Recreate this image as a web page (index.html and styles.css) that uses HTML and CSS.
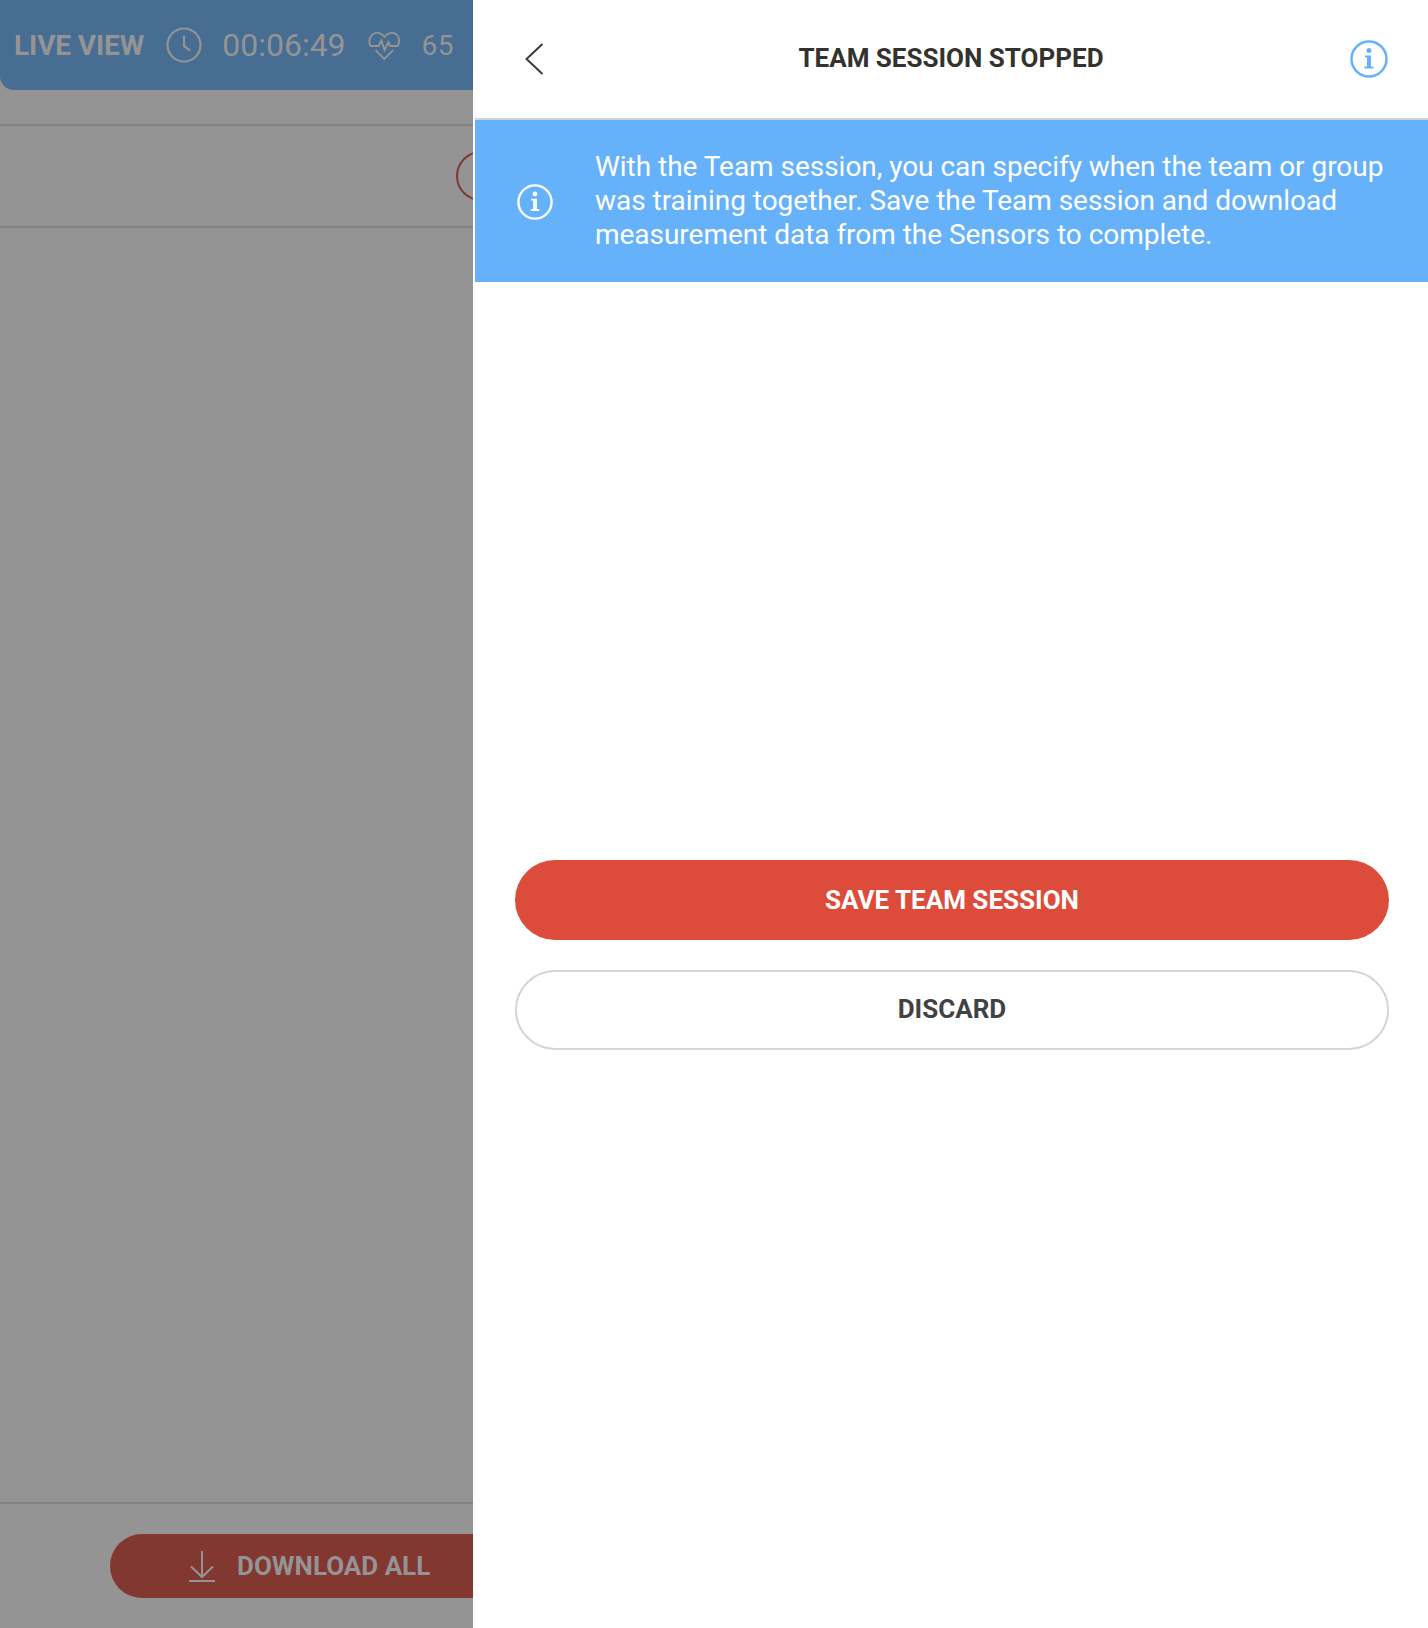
FILE: index.html
```html
<!DOCTYPE html>
<html lang="en">
<head>
<meta charset="utf-8">
<title>Team session stopped</title>
<link rel="stylesheet" href="styles.css">
</head>
<body>
<div class="stage">
  <section class="back-pane">
    <header class="topbar">
      <span class="live">LIVE VIEW</span>
      <svg class="clock" viewBox="0 0 36 36" aria-hidden="true"><circle cx="18" cy="18" r="16.500"/><path d="M18 8.500V19L24 23.500"/></svg>
      <span class="time">00:06:49</span>
      <svg class="heart" viewBox="0 0 34 30" aria-hidden="true"><path d="M2.700 15H11L13.700 9.300L17 19.300L21 11L22.700 15H30.300C34 10 31.500 1.500 24.500 1.500C21.500 1.500 19 3 17 5.500C15 3 12.500 1.500 9.500 1.500C2.500 1.500 -.5 10 2.700 15ZM7.700 19.300L16.700 28.300L26 19.300"/></svg>
      <span class="bpm">65</span>
    </header>
    <div class="row">
      <span class="ring"></span>
    </div>
    <div class="spacer"></div>
    <footer class="foot">
      <div class="download">
        <svg class="dl-icon" viewBox="0 0 28 32" aria-hidden="true"><path d="M14 1V27M3 16.500L14 27L25 16.500M1 31H27"/></svg>
        <span>DOWNLOAD ALL</span>
      </div>
    </footer>
  </section>
  <main class="panel">
    <header class="panel-head">
      <svg class="chevron" viewBox="0 0 19 32" aria-hidden="true"><path d="M17.500 1L1.500 16L17.500 31"/></svg>
      <h1 class="title">TEAM SESSION STOPPED</h1>
      <svg class="info info-head" viewBox="0 0 38 38" aria-hidden="true"><circle cx="19" cy="19" r="17.500"/><circle class="dot" cx="19" cy="10.500" r="2.500"/><path class="stem" d="M15 15.500H21V26.500H23.500V28.500H14.500V26.500H17V17.500H15Z"/></svg>
    </header>
    <div class="banner">
      <svg class="info info-banner" viewBox="0 0 38 38" aria-hidden="true"><circle cx="19" cy="19" r="17.500"/><circle class="dot" cx="19" cy="10.500" r="2.500"/><path class="stem" d="M15 15.500H21V26.500H23.500V28.500H14.500V26.500H17V17.500H15Z"/></svg>
      <p class="banner-text">With the Team session, you can specify when the team or group was training together. Save the Team session and download measurement data from the Sensors to complete.</p>
    </div>
    <div class="actions">
      <button class="btn btn-save" type="button">SAVE TEAM SESSION</button>
      <button class="btn btn-discard" type="button">DISCARD</button>
    </div>
  </main>
</div>
</body>
</html>
```
FILE: styles.css
```css
* { box-sizing: border-box; }
html, body { margin: 0; padding: 0; }
body { font-family: Roboto, "Liberation Sans", sans-serif; background: #fff; }

.stage { display: flex; width: 1428px; height: 1628px; overflow: hidden; }

.back-pane {
  width: 473px;
  flex: none;
  display: flex;
  flex-direction: column;
  overflow: hidden;
  background: #949494;
  color: #949494;
}

.topbar {
  height: 90px;
  flex: none;
  display: flex;
  align-items: center;
  padding: 0 0 0 14px;
  background: #476d92;
  border-bottom-left-radius: 14px;
  white-space: nowrap;
}
.live { font-size: 28px; font-weight: 700; letter-spacing: -.1px; }
.clock { width: 36px; height: 36px; margin-left: 22px; fill: none; stroke: #949494; stroke-width: 2.200; }
.time { font-size: 32px; margin-left: 20px; }
.heart { width: 33px; height: 30px; margin: 2px 0 0 22px; fill: none; stroke: #949494; stroke-width: 2; }
.bpm { font-size: 28px; margin-left: 21px; letter-spacing: .5px; }

.row {
  height: 104px;
  margin-top: 34px;
  flex: none;
  display: flex;
  align-items: center;
  justify-content: flex-end;
  border-top: 2px solid #828282;
  border-bottom: 2px solid #828282;
}
.ring {
  width: 50px;
  height: 50px;
  flex: none;
  margin-right: -33px;
  border: 2px solid #823730;
  border-radius: 50%;
}

.spacer { flex: 1; }

.foot {
  height: 126px;
  flex: none;
  padding: 30px 0 0 110px;
  border-top: 2px solid #828282;
}
.download {
  width: 420px;
  height: 64px;
  display: flex;
  align-items: center;
  padding-left: 78px;
  gap: 21px;
  border-radius: 32px;
  background: #823730;
  font-size: 26px;
  font-weight: 700;
  white-space: nowrap;
}
.dl-icon { width: 28px; height: 32px; fill: none; stroke: #949494; stroke-width: 2; }

.panel { flex: 1; min-width: 0; display: flex; flex-direction: column; background: #fff; }

.panel-head {
  height: 120px;
  flex: none;
  margin-left: 2px;
  display: flex;
  align-items: center;
  justify-content: space-between;
  padding: 0 40px 2px 50px;
  border-bottom: 2px solid #d3d3d3;
}
.chevron { width: 19px; height: 32px; margin-top: 2px; margin-right: 8px; fill: none; stroke: #3d3d3d; stroke-width: 2; }
.title { margin: 0; font-size: 26px; font-weight: 700; color: #33322e; line-height: 32px; }
.info { flex: none; }
.info circle { fill: none; stroke-width: 2.500; }
.info .dot { stroke: none; }
.info-head { width: 38px; height: 38px; margin-top: 2px; }
.info-head circle { stroke: #66b2fa; }
.info-head .dot, .info-head .stem { fill: #66b2fa; }
.info-banner { width: 36px; height: 36px; margin: 2px 0 0 42px; }
.info-banner circle { stroke: #fff; }
.info-banner .dot, .info-banner .stem { fill: #fff; }

.banner {
  height: 162px;
  flex: none;
  margin-left: 2px;
  display: flex;
  align-items: center;
  background: #66b2fa;
}
.banner-text {
  margin: 0 0 0 42px;
  width: 800px;
  font-size: 28px;
  letter-spacing: -.03px;
  line-height: 34px;
  color: #fff;
}

.actions {
  display: flex;
  flex-direction: column;
  gap: 30px;
  padding: 578px 39px 0 42px;
}
.btn {
  height: 80px;
  width: 100%;
  border-radius: 40px;
  font-family: inherit;
  font-size: 26px;
  font-weight: 700;
}
.btn-save { padding: 0 0 1px; background: #dd4c3a; color: #fff; border: 0; }
.btn-discard { padding: 0 0 2px; background: #fff; color: #424242; border: 2px solid #d5d5d5; }
```
